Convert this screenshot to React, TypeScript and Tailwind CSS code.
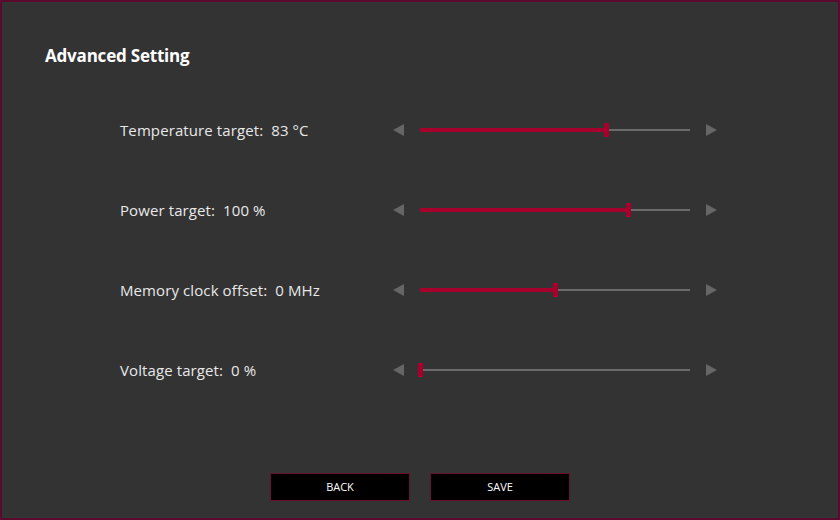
import React from "react"

const rows = [
  { label: "Temperature target:", value: "83 °C", pct: 0.69 },
  { label: "Power target:", value: "100 %", pct: 0.77 },
  { label: "Memory clock offset:", value: "0 MHz", pct: 0.5 },
  { label: "Voltage target:", value: "0 %", pct: 0 },
]

function Arrow({ dir }: { dir: "left" | "right" }) {
  return (
    <svg width="11" height="12" viewBox="0 0 11 12" className="shrink-0">
      {dir === "left" ? (
        <polygon points="11,0 11,12 0,6" fill="#666666" />
      ) : (
        <polygon points="0,0 0,12 11,6" fill="#666666" />
      )}
    </svg>
  )
}

function Slider({ pct }: { pct: number }) {
  const x = Math.round(pct * 270)
  return (
    <div className="relative w-[270px] h-[16px] shrink-0">
      <div className="absolute left-0 right-0 top-[7px] h-[2px] bg-[#6b6b6b]" />
      <div className="absolute left-0 top-[6px] h-[4px] bg-[#a8002c]" style={{ width: x }} />
      <div className="absolute top-[1px] w-[5px] h-[14px] bg-[#a8002c]" style={{ left: x - 2 }} />
    </div>
  )
}

export default function App() {
  return (
    <div
      className="w-[840px] h-[520px] border-2 border-[#5a0a2e] bg-[#333333] text-[#e8e8e8] flex flex-col"
      style={{ fontFamily: '"Open Sans", "Noto Sans", sans-serif' }}
    >
      <h1 className="ml-[43px] mt-[42px] h-6 leading-6 text-[17px] font-bold text-white tracking-[-0.2px]">
        Advanced Setting
      </h1>

      <div className="mt-[50px] flex flex-col gap-[56px]">
        {rows.map((r) => (
          <div key={r.label} className="flex items-center h-6 pl-[118px]">
            <div className="w-[273px] text-[15px] tracking-[0.1px] whitespace-pre">
              {r.label}  {r.value}
            </div>
            <Arrow dir="left" />
            <div className="w-[16px]" />
            <Slider pct={r.pct} />
            <div className="w-[16px]" />
            <Arrow dir="right" />
          </div>
        ))}
      </div>

      <div className="mt-[91px] flex justify-center gap-5">
        <button className="w-[140px] h-[28px] bg-black border border-[#6a0f32] text-white text-[11px]">
          BACK
        </button>
        <button className="w-[140px] h-[28px] bg-black border border-[#6a0f32] text-white text-[11px]">
          SAVE
        </button>
      </div>
    </div>
  )
}
